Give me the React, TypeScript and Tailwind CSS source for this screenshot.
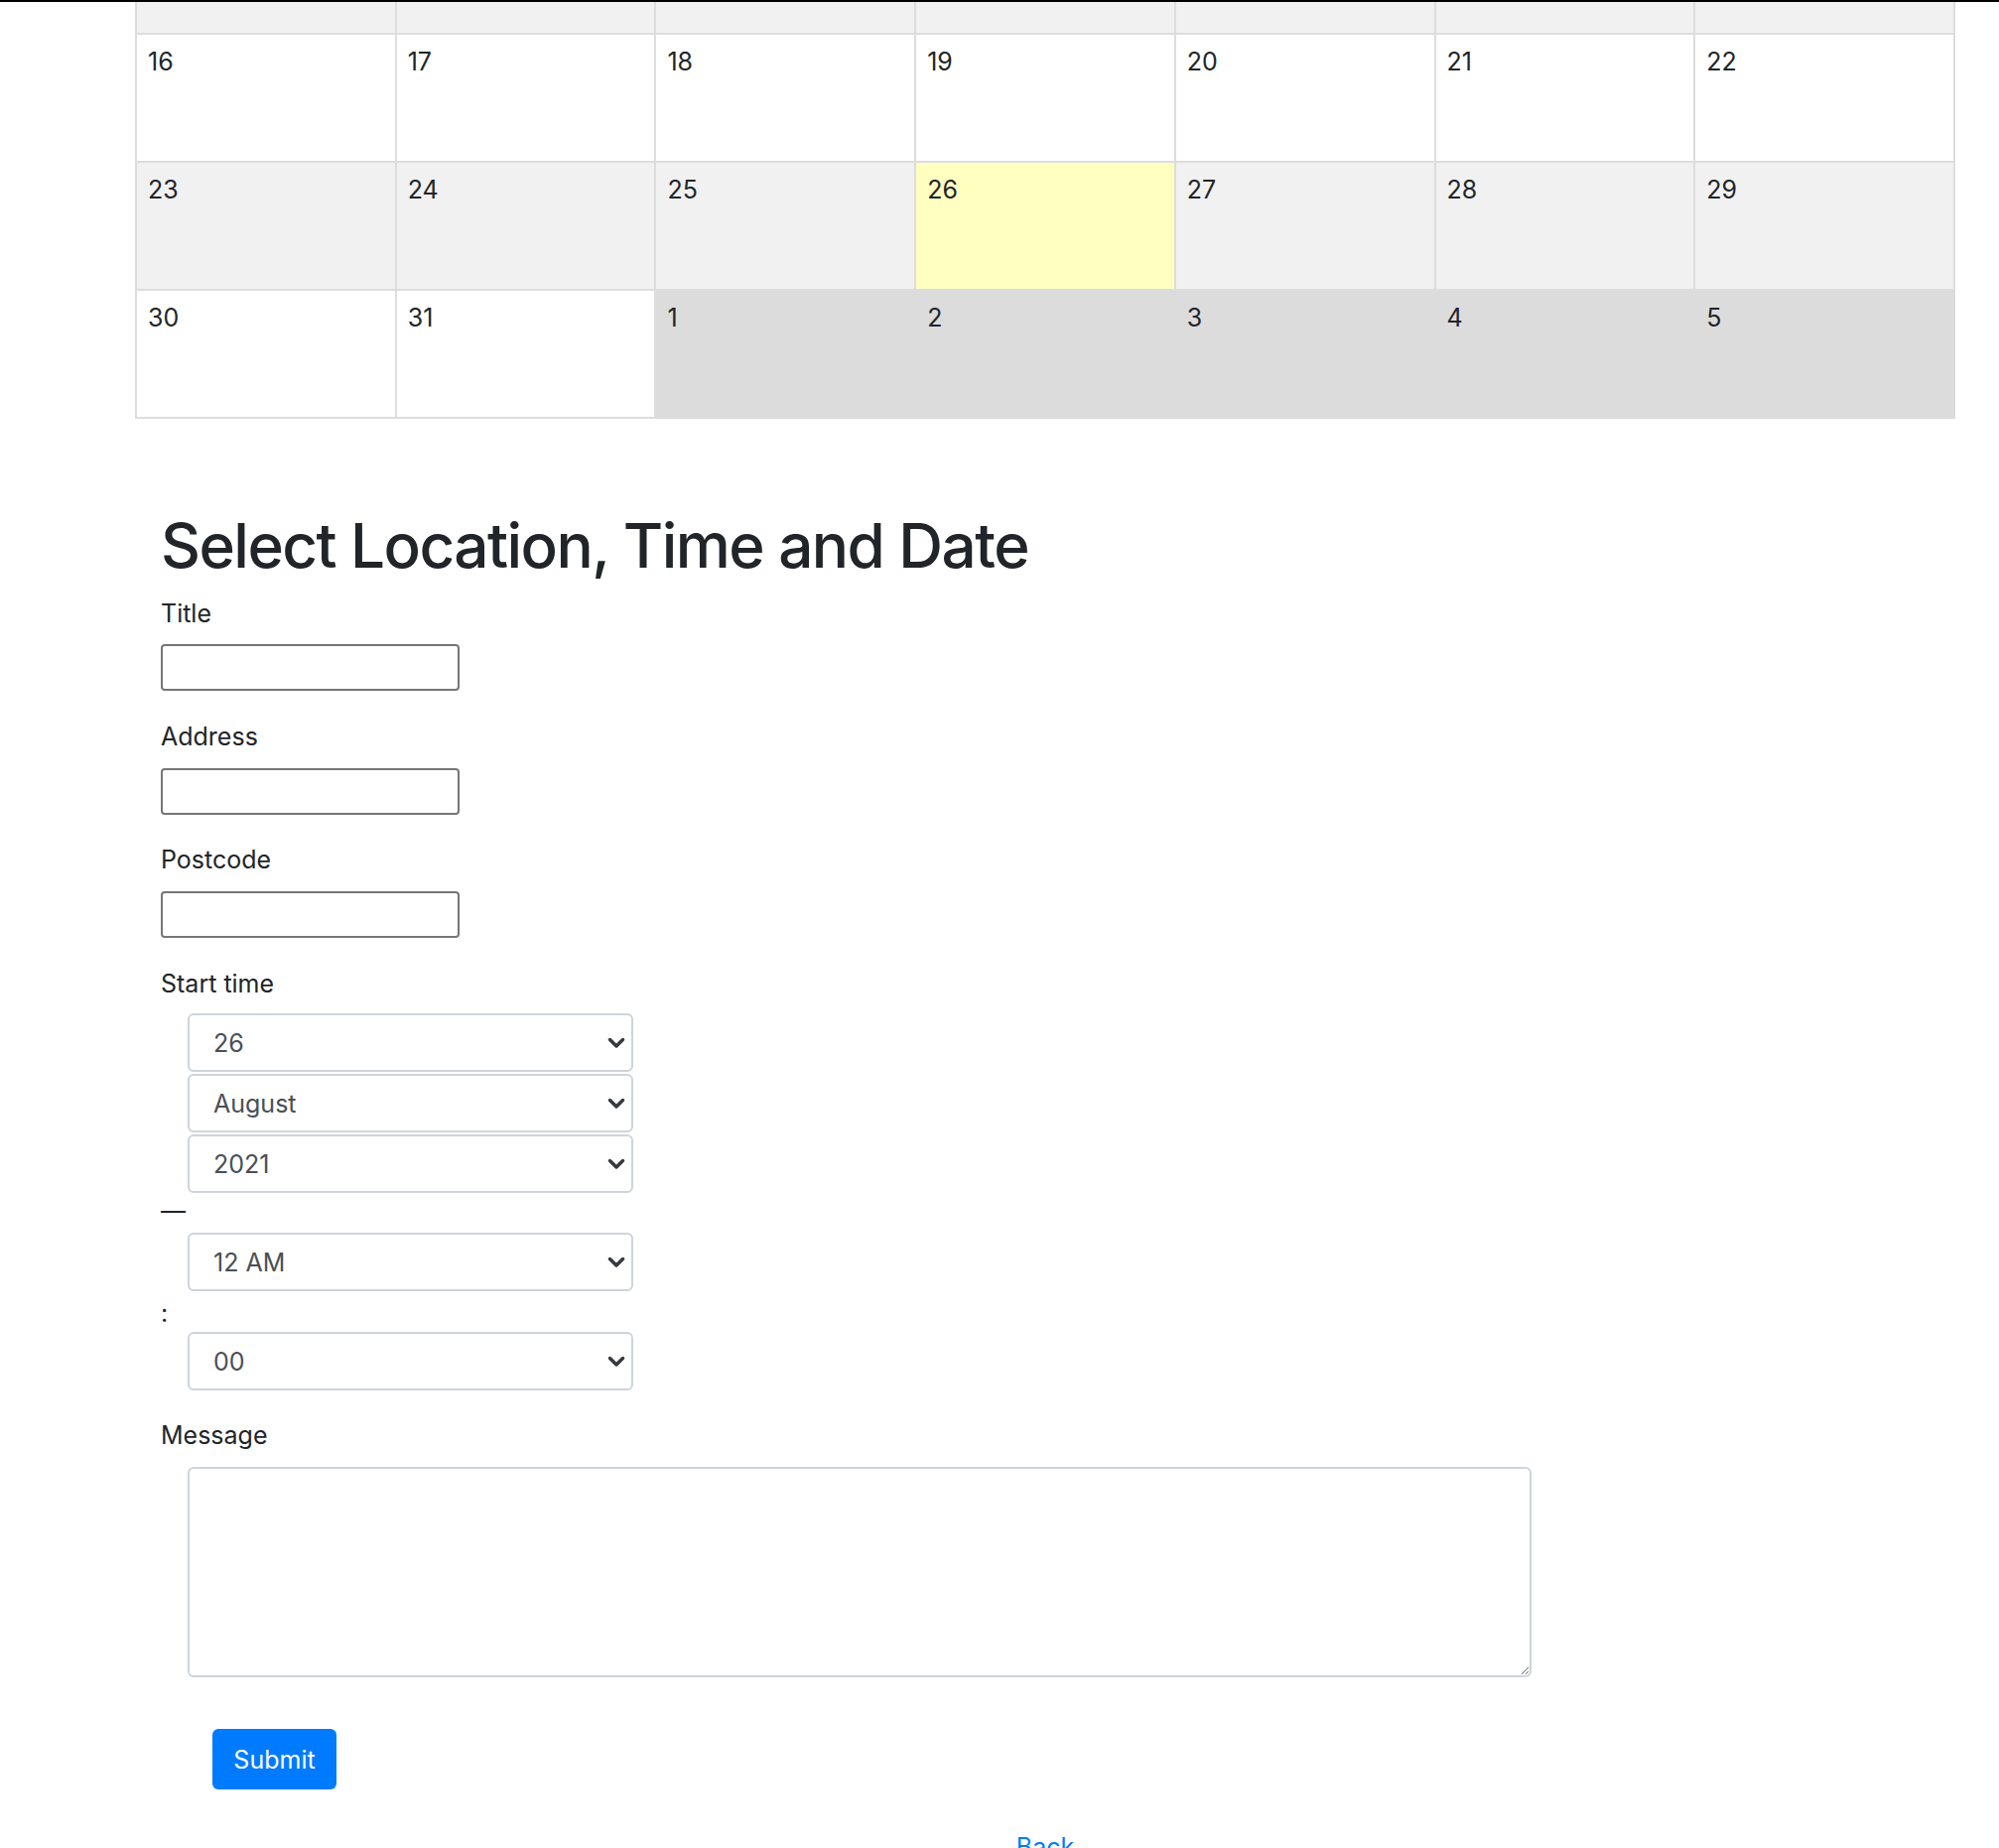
import React from "react";

const rows: { days: number[]; kind: ("w" | "g" | "t" | "n")[] }[] = [
  { days: [16, 17, 18, 19, 20, 21, 22], kind: ["w", "w", "w", "w", "w", "w", "w"] },
  { days: [23, 24, 25, 26, 27, 28, 29], kind: ["g", "g", "g", "t", "g", "g", "g"] },
  { days: [30, 31, 1, 2, 3, 4, 5], kind: ["w", "w", "n", "n", "n", "n", "n"] },
];

function cellClass(k: "w" | "g" | "t" | "n") {
  if (k === "g") return "bg-[#f1f1f1] border-[#dddddd]";
  if (k === "t") return "bg-[#ffffc0] border-[#dddddd]";
  if (k === "n") return "bg-[#dcdcdc] border-[#dcdcdc]";
  return "bg-white border-[#dddddd]";
}

function Chevron() {
  return (
    <svg width="20" height="14" viewBox="0 0 20 14" className="absolute right-[5px] top-1/2 -translate-y-1/2">
      <path d="M3.5 3.5 L10 10 L16.5 3.5" fill="none" stroke="#343a40" strokeWidth="3.5" strokeLinecap="round" strokeLinejoin="round" />
    </svg>
  );
}

function Select({ value }: { value: string }) {
  return (
    <div className="relative ml-[27px] flex h-[59px] w-[449px] items-center rounded-[6px] border-2 border-[#ced4da] bg-white pl-[24px] text-[25px] text-[#495057]">
      <span>{value}</span>
      <Chevron />
    </div>
  );
}

function TextInput() {
  return <div className="h-[47px] w-[301px] rounded-[4px] border-2 border-[#767676] bg-white" />;
}

export default function App() {
  return (
    <div className="min-h-screen bg-white font-['Inter',sans-serif] text-[#212529]">
      <div className="h-[2px] bg-black" />
      <div className="ml-[136px] w-[1834px]">
        <div className="grid h-[33px] grid-cols-7 border-l-2 border-[#dddddd]">
          {Array.from({ length: 7 }).map((_, i) => (
            <div key={i} className="border-b-2 border-r-2 border-[#dddddd] bg-[#f1f1f1]" />
          ))}
        </div>
        {rows.map((r, ri) => (
          <div key={ri} className={`grid h-[129px] grid-cols-7 border-l-2 border-[#dddddd]`}>
            {r.days.map((d, i) => (
              <div key={i} className={`border-b-2 border-r-2 pl-[11px] pt-[9px] text-[25px] leading-[36px] ${cellClass(r.kind[i])}`}>
                {d}
              </div>
            ))}
          </div>
        ))}
      </div>

      <div className="ml-[162px] mt-[91px]">
        <h1 className="mb-[13px] text-[62px] font-medium leading-[1.2] tracking-[-0.025em]">Select Location, Time and Date</h1>
        <div className="text-[25px] leading-[36px]">
          <div className="mb-[13px]">Title</div>
          <TextInput />
          <div className="mb-[14px] mt-[28px]">Address</div>
          <TextInput />
          <div className="mb-[14px] mt-[27px]">Postcode</div>
          <TextInput />
          <div className="mb-[12px] mt-[28px]">Start time</div>
          <div className="flex flex-col gap-[2px]">
            <Select value="26" />
            <Select value="August" />
            <Select value="2021" />
          </div>
          <div>—</div>
          <div className="mt-[4px]">
            <Select value="12 AM" />
          </div>
          <div className="mt-[4px]">:</div>
          <div className="mt-[1px]">
            <Select value="00" />
          </div>
          <div className="mb-[14px] mt-[27px]">Message</div>
          <textarea className="ml-[27px] block h-[212px] w-[1354px] rounded-[6px] border-2 border-[#ced4da] bg-white" />
          <button className="ml-[52px] mt-[52px] h-[61px] w-[125px] rounded-[6px] bg-[#007bff] text-[25px] text-white">Submit</button>
        </div>
      </div>
      <div className="ml-[136px] mt-[40px] w-[1834px] text-center text-[25px] leading-[36px] text-[#007bff]">Back</div>
    </div>
  );
}
